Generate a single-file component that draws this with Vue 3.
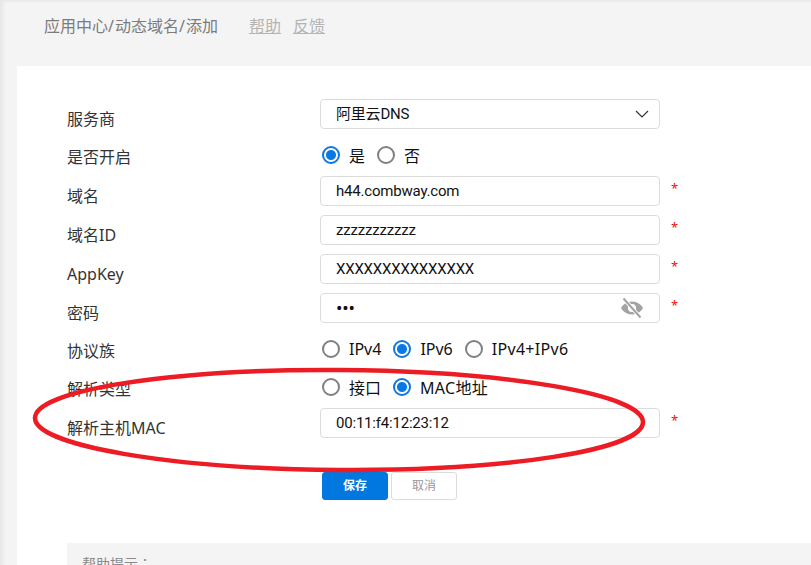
<script setup>
const inputs = [
  { label: '域名', value: 'h44.combway.com' },
  { label: '域名ID', value: 'zzzzzzzzzzz' },
  { label: 'AppKey', value: 'XXXXXXXXXXXXXXX' },
]
</script>

<template>
  <div class="page">
    <header class="top">
      <span class="crumb">应用中心<i>/</i>动态域名<i>/</i>添加</span>
      <a class="link first">帮助</a>
      <a class="link">反馈</a>
    </header>
    <main class="card">
      <form class="form">
        <div class="row tall">
          <label class="lbl">服务商</label>
          <div class="field select">
            <span>阿里云DNS</span>
            <svg class="chev" width="14" height="8" viewBox="0 0 14 8"><path d="M1 1l6 6 6-6" fill="none" stroke="#333" stroke-width="1.2"/></svg>
          </div>
        </div>
        <div class="row opts">
          <label class="lbl">是否开启</label>
          <div class="radios">
            <span class="radio on"></span><span class="opt">是</span>
            <span class="radio"></span><span class="opt">否</span>
          </div>
        </div>
        <div v-for="f in inputs" :key="f.label" class="row tall">
          <label class="lbl">{{ f.label }}</label>
          <div class="field">{{ f.value }}</div>
          <span class="req">*</span>
        </div>
        <div class="row tall">
          <label class="lbl">密码</label>
          <div class="field pass">
            <span class="dots">•••</span>
            <svg class="eye" width="24" height="22" viewBox="0 0 24 22">
              <path d="M12 4.500C6.800 4.500 2.800 7.500 1 11c1.800 3.500 5.800 6.500 11 6.500s9.200-3 11-6.500c-1.800-3.500-5.800-6.500-11-6.500z" fill="#a3a3a3"/>
              <circle cx="12" cy="11" r="4" fill="#fff"/>
              <path d="M3.500 1.500L20 20" stroke="#fff" stroke-width="4"/>
              <path d="M3.500 1.500L20.500 20.500" stroke="#a3a3a3" stroke-width="2"/>
            </svg>
          </div>
          <span class="req">*</span>
        </div>
        <div class="row opts">
          <label class="lbl">协议族</label>
          <div class="radios">
            <span class="radio"></span><span class="opt">IPv4</span>
            <span class="radio on"></span><span class="opt">IPv6</span>
            <span class="radio"></span><span class="opt">IPv4+IPv6</span>
          </div>
        </div>
        <div class="row opts">
          <label class="lbl">解析类型</label>
          <div class="radios">
            <span class="radio"></span><span class="opt">接口</span>
            <span class="radio on"></span><span class="opt">MAC地址</span>
          </div>
        </div>
        <div class="row tall">
          <label class="lbl">解析主机MAC</label>
          <div class="field">00:11:f4:12:23:12</div>
          <span class="req">*</span>
        </div>
        <div class="actions">
          <button type="button" class="btn primary">保存</button>
          <button type="button" class="btn">取消</button>
        </div>
      </form>
      <section class="help">帮助提示：</section>
    </main>
    <svg class="mark" width="811" height="565" viewBox="0 0 811 565">
      <ellipse cx="339" cy="420" rx="304" ry="50" transform="rotate(0.4 339 420)" fill="none" stroke="#ed1c24" stroke-width="4.500"/>
    </svg>
  </div>
</template>

<style>
html, body { margin: 0; background: #f4f4f4; }
</style>

<style scoped>
.page {
  position: relative;
  width: 811px;
  height: 565px;
  overflow: hidden;
  background:
    linear-gradient(180deg, #e8e8e8 0, rgba(244, 244, 244, 0) 3px),
    linear-gradient(90deg, #e6e6e6 0, #f4f4f4 6px);
  font-family: "Noto Sans", "Noto Sans CJK SC", sans-serif;
  color: #333;
}
.top {
  height: 66px;
  box-sizing: border-box;
  padding: 14px 0 0 44px;
  display: flex;
  align-items: flex-start;
  font-size: 16px;
  line-height: 24px;
}
.crumb { color: #7c7c7c; }
.crumb i { font-style: normal; letter-spacing: 1px; }
.link { color: #b4b4b4; text-decoration: underline; margin-left: 12px; }
.link.first { margin-left: 31px; }
.card {
  margin-left: 17px;
  height: 499px;
  background: #fff;
  padding: 33px 0 0 50px;
  box-sizing: border-box;
}
.form { display: flex; flex-direction: column; gap: 9px; }
.row { display: flex; align-items: flex-start; }
.row.tall { height: 30px; }
.row.opts { height: 29px; }
.lbl {
  width: 253px;
  flex: none;
  font-size: 16px;
  line-height: 24px;
  padding-top: 8px;
}
.opts .lbl { padding-top: 7px; }
.field {
  width: 340px;
  height: 30px;
  box-sizing: border-box;
  border: 1px solid #dcdcdc;
  border-radius: 4px;
  padding: 0 15px;
  font-family: Roboto, "Noto Sans CJK SC", sans-serif;
  font-size: 15px;
  letter-spacing: -.2px;
  line-height: 28px;
  color: #111;
  display: flex;
  align-items: center;
  justify-content: space-between;
  flex: none;
}
.select { padding-right: 10px; }
.pass { padding-right: 15px; }
.dots { font-size: 17px; font-family: "Noto Sans", sans-serif; }
.eye { margin-left: auto; }
.req {
  color: #f01010;
  font-size: 13px;
  line-height: 20px;
  margin: 2px 0 0 11px;
}
.radios {
  display: flex;
  align-items: center;
  height: 24px;
  margin-top: 5px;
  padding-left: 2px;
  font-size: 16px;
  color: #111;
}
.radio {
  width: 18px;
  height: 18px;
  box-sizing: border-box;
  border: 2px solid #808080;
  border-radius: 50%;
  margin-right: 9px;
  flex: none;
}
.radio.on {
  border-color: #0a78e2;
  background: radial-gradient(circle, #0a78e2 0 4.500px, #fff 5.500px);
}
.opt { margin-right: 12px; }
.opt:last-child { letter-spacing: .3px; }
.actions {
  display: flex;
  gap: 3px;
  margin: 25px 0 0 255px;
}
.btn {
  width: 66px;
  height: 28px;
  border: 1px solid #dcdcdc;
  border-radius: 3px;
  background: #fff;
  color: #999;
  font: 12px/24px "Noto Sans CJK SC", sans-serif;
  padding: 0 0 2px;
}
.btn.primary {
  background: #0078e0;
  border-color: #0078e0;
  color: #fff;
  font-weight: 700;
}
.help {
  margin-top: 43px;
  height: 60px;
  background: #f4f4f4;
  padding: 10px 15px;
  font-family: "Noto Sans CJK TC", sans-serif;
  font-size: 14px;
  line-height: 20px;
  color: #8a8a8a;
}
.mark { position: absolute; left: 0; top: 0; pointer-events: none; }
</style>
